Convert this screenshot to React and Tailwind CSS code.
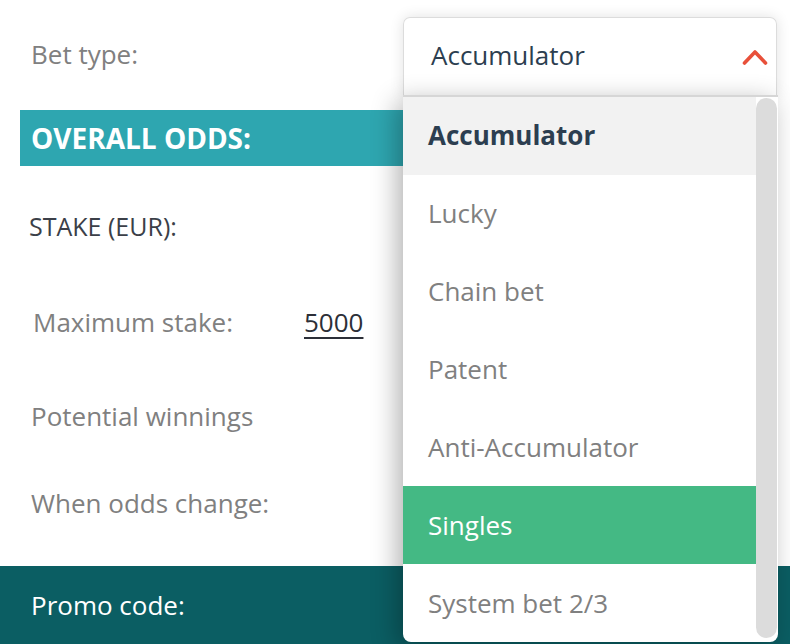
const options = [
  "Accumulator",
  "Lucky",
  "Chain bet",
  "Patent",
  "Anti-Accumulator",
  "Singles",
  "System bet 2/3",
];

const BetSlip = () => {
  const selected = "Accumulator";
  const hovered = "Singles";

  return (
    <div
      className="relative w-[790px] h-[644px] overflow-hidden bg-white text-[26px]"
      style={{ fontFamily: "'Open Sans', 'Liberation Sans', sans-serif" }}
    >
      {/* ================= BET TYPE ================= */}
      <div className="flex items-start h-[110px]">
        <div className="pl-[31px] pt-[36px] w-[403px] text-[#808080] leading-[36px]">
          Bet type:
        </div>
        <div className="mt-[17px] w-[374px] h-[79px] border border-b-0 border-[#dcdcdc] rounded-t-[7px] flex items-center justify-between pl-[27px] pr-[8px] pb-[4px] text-[#2c3e50] shadow-[0_0_14px_rgba(0,0,0,0.12)]">
          <span>{selected}</span>
          <svg width="26" height="18" viewBox="0 0 26 18" className="mt-[4px]">
            <polyline
              points="2.5,15 13,4 23.5,15"
              fill="none"
              stroke="#e8503a"
              strokeWidth="3.6"
              strokeLinecap="round"
              strokeLinejoin="round"
            />
          </svg>
        </div>
      </div>

      {/* ================= OVERALL ODDS ================= */}
      <div className="mx-[20px] h-[56px] bg-[#2ea6b0] flex items-center pl-[11px] text-white font-bold text-[28px]">
        OVERALL ODDS:
      </div>

      {/* ================= ROWS ================= */}
      <div className="h-[122px] flex items-center pl-[29px] text-[#3b3f48] text-[25px]">
        STAKE (EUR):
      </div>
      <div className="h-[68px] flex items-center pl-[33px] text-[#808080]">
        <span className="w-[271px]">Maximum stake:</span>
        <span className="text-[#2c2f38] underline underline-offset-[5px] decoration-[2px]">5000</span>
      </div>
      <div className="h-[120px] flex items-center pl-[31px] text-[#808080]">
        Potential winnings
      </div>
      <div className="h-[54px] flex items-center pl-[31px] text-[#808080]">
        When odds change:
      </div>
      <div className="h-[36px]"></div>

      {/* ================= PROMO ================= */}
      <div className="h-[78px] bg-[#0b5e63] flex items-center pl-[31px] text-white">
        Promo code:
      </div>

      {/* ================= DROPDOWN LIST ================= */}
      <div className="absolute left-[403px] top-[95px] w-[375px] h-[547px] bg-white border-t-2 border-[#d6d6d6] rounded-b-[8px] shadow-[-6px_6px_26px_rgba(0,0,0,0.3)] flex overflow-hidden">
        <div className="flex-1 flex flex-col">
          {options.map((opt) => (
            <div
              key={opt}
              className={
                "h-[78px] flex items-center pl-[25px] " +
                (opt === selected
                  ? "bg-[#f2f2f2] text-[#2c3e50] font-bold"
                  : opt === hovered
                  ? "bg-[#44b984] text-white"
                  : "text-[#808080]")
              }
            >
              {opt}
            </div>
          ))}
        </div>
        <div className="w-[21px] mr-[1px] mt-[1px] mb-[4px] rounded-full bg-[#dcdcdc]"></div>
      </div>
    </div>
  );
};

export default function App() {
  return <BetSlip />;
}
